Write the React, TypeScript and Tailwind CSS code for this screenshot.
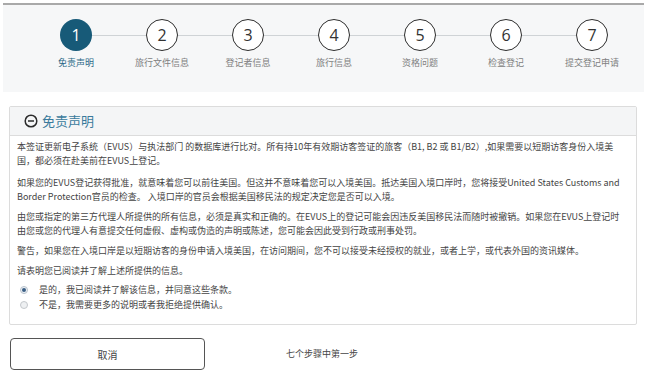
import React from "react";

const steps = ["免责声明", "旅行文件信息", "登记者信息", "旅行信息", "资格问题", "检查登记", "提交登记申请"];

export default function App() {
  return (
    <div
      className="w-[647px] h-[379px] bg-white overflow-hidden text-[#333]"
      style={{ fontFamily: '"Noto Sans CJK SC", "Noto Sans", sans-serif' }}
    >
      <div className="pt-[3px] px-[3px]">
        <div className="h-[89px] bg-[#f6f7f8] border-t-[2px] border-[#a9a9a9] relative">
          <div className="absolute left-[65px] right-[66px] top-[30px] border-t border-[#cfd3d6]" />
          <div className="relative flex pl-[30px] pt-[14px]">
            {steps.map((s, i) => (
              <div key={i} className="w-[86px] flex flex-col items-center">
                <div
                  className={
                    i === 0
                      ? "w-[32px] h-[32px] rounded-full bg-[#175a78] text-white flex items-center justify-center text-[16px]"
                      : "w-[32px] h-[32px] rounded-full bg-white border-[1.5px] border-[#2d2d2d] text-[#333] flex items-center justify-center text-[16px]"
                  }
                  style={{ fontFamily: '"Open Sans", sans-serif' }}
                >
                  {i + 1}
                </div>
                <div className={i === 0 ? "mt-[5px] text-[9px] text-[#2a6886] whitespace-nowrap" : "mt-[5px] text-[9px] text-[#808080] whitespace-nowrap"}>
                  {s}
                </div>
              </div>
            ))}
          </div>
        </div>
      </div>

      <div className="ml-[9px] mr-[10px] mt-[14px] h-[219px] border border-[#dcdcdc] rounded-[2px]">
        <div className="h-[29px] bg-[#f4f5f6] border-b border-[#dcdcdc] flex items-center pl-[14px] gap-[4px]">
          <svg width="14" height="14" viewBox="0 0 14 14">
            <circle cx="7" cy="7" r="5.8" fill="none" stroke="#2b2b2b" strokeWidth="1.5" />
            <line x1="4" y1="7" x2="10" y2="7" stroke="#2b2b2b" strokeWidth="1.5" />
          </svg>
          <span className="text-[13px] text-[#3a7a9c]">免责声明</span>
        </div>
        <div className="pl-[7px] pr-[8px] pt-[4px] text-[9px] leading-[14px] text-[#444]">
          <p>
            本签证更新电子系统（EVUS）与执法部门 的数据库进行比对。所有持10年有效期访客签证的旅客（B1, B2 或 B1/B2）,如果需要以短期访客身份入境美国，都必须在赴美前在EVUS上登记。
          </p>
          <p className="mt-[8px]">
            如果您的EVUS登记获得批准，就意味着您可以前往美国。但这并不意味着您可以入境美国。抵达美国入境口岸时，您将接受United States Customs and Border Protection官员的检查。 入境口岸的官员会根据美国移民法的规定决定您是否可以入境。
          </p>
          <p className="mt-[6px]">
            由您或指定的第三方代理人所提供的所有信息，必须是真实和正确的。在EVUS上的登记可能会因违反美国移民法而随时被撤销。如果您在EVUS上登记时由您或您的代理人有意提交任何虚假、虚构或伪造的声明或陈述，您可能会因此受到行政或刑事处罚。
          </p>
          <p className="mt-[6px]">警告，如果您在入境口岸是以短期访客的身份申请入境美国，在访问期间，您不可以接受未经授权的就业，或者上学，或代表外国的资讯媒体。</p>
          <p className="mt-[6px]">请表明您已阅读并了解上述所提供的信息。</p>
          <div className="mt-[5px] flex items-center gap-[11px] pl-[3px]">
            <span className="w-[8px] h-[8px] rounded-full border border-[#b8c2cc] bg-[#eef2f6] flex items-center justify-center">
              <span className="w-[4px] h-[4px] rounded-full bg-[#3a5f85]" />
            </span>
            <span>是的，我已阅读并了解该信息，并同意这些条款。</span>
          </div>
          <div className="mt-[1px] flex items-center gap-[11px] pl-[3px]">
            <span className="w-[8px] h-[8px] rounded-full border border-[#c4c8cc] bg-[#eef0f2]" />
            <span>不是，我需要更多的说明或者我拒绝提供确认。</span>
          </div>
        </div>
      </div>

      <div className="flex items-center mt-[13px]">
        <button className="ml-[10px] w-[195px] h-[32px] border-[1.5px] border-[#555] rounded-[4px] bg-white text-[10px] text-[#444]">
          取消
        </button>
        <span className="ml-[81px] text-[9px] text-[#444]">七个步骤中第一步</span>
      </div>
    </div>
  );
}
